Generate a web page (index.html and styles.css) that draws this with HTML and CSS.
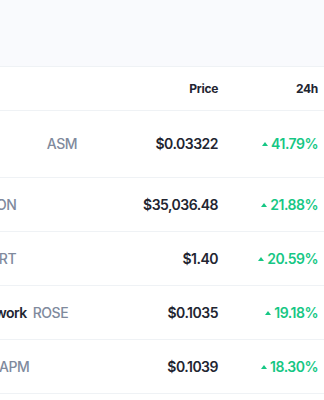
FILE: index.html
```html
<!DOCTYPE html>
<html>
<head>
<meta charset="utf-8">
<link rel="stylesheet" href="styles.css">
</head>
<body>
<div class="band"></div>
<div class="viewport">
  <div class="table">
    <div class="row head">
      <div class="cell name-cell"><span class="hname">Name</span></div>
      <div class="cell num">Price</div>
      <div class="cell num">24h</div>
    </div>
    <div class="row">
      <div class="cell name-cell"><span class="name">Assemble Protocol</span><span class="sym">ASM</span></div>
      <div class="cell num price">$0.03322</div>
      <div class="cell num chg"><span class="tri"></span>41.79%</div>
    </div>
    <div class="row">
      <div class="cell name-cell"><span class="name">Hbtc</span><span class="sym">BTCON</span></div>
      <div class="cell num price">$35,036.48</div>
      <div class="cell num chg"><span class="tri"></span>21.88%</div>
    </div>
    <div class="row">
      <div class="cell name-cell"><span class="name">Smart</span><span class="sym">SMRT</span></div>
      <div class="cell num price">$1.40</div>
      <div class="cell num chg"><span class="tri"></span>20.59%</div>
    </div>
    <div class="row">
      <div class="cell name-cell"><span class="name">Oasis Network</span><span class="sym">ROSE</span></div>
      <div class="cell num price">$0.1035</div>
      <div class="cell num chg"><span class="tri"></span>19.18%</div>
    </div>
    <div class="row">
      <div class="cell name-cell"><span class="name">ApmCoin</span><span class="sym">APM</span></div>
      <div class="cell num price">$0.1039</div>
      <div class="cell num chg"><span class="tri"></span>18.30%</div>
    </div>
  </div>
</div>
</body>
</html>
```
FILE: styles.css
```css
html, body {
  margin: 0;
  padding: 0;
  background: #ffffff;
  font-family: Inter, "Noto Sans", sans-serif;
  color: #222531;
}
.band {
  height: 67px;
  background: #f9fafd;
  border-bottom: 1px solid #eff2f5;
  box-sizing: border-box;
}
.viewport {
  overflow: hidden;
  width: 324px;
}
.table {
  margin-left: -66px;
  width: 390px;
}
.row {
  display: grid;
  grid-template-columns: 143px 1fr 100px;
  padding-right: 6px;
  border-bottom: 1px solid #eff2f5;
  box-sizing: border-box;
}
.cell {
  display: flex;
  align-items: center;
  min-height: 53px;
  padding: 11px 0;
  box-sizing: border-box;
  font-size: 14px;
  font-weight: 600;
  line-height: 22px;
  letter-spacing: -0.5px;
}
.head .cell {
  min-height: 43px;
  padding: 0;
  font-size: 12px;
  font-weight: 700;
  line-height: 18px;
  letter-spacing: -0.3px;
}
.hname { visibility: hidden; }
.num {
  justify-content: flex-end;
  text-align: right;
  white-space: nowrap;
}
.name {
  color: #222531;
  margin-right: 6px;
  flex: 0 1 auto;
  min-width: 0;
}
.sym {
  color: #808a9d;
  font-weight: 500;
  white-space: nowrap;
  flex: 0 0 auto;
}
.price { color: #222531; }
.chg { color: #16c784; }
.tri {
  width: 0;
  height: 0;
  border-left: 3.5px solid transparent;
  border-right: 3.5px solid transparent;
  border-bottom: 4.5px solid #16c784;
  margin-right: 3px;
}
```
